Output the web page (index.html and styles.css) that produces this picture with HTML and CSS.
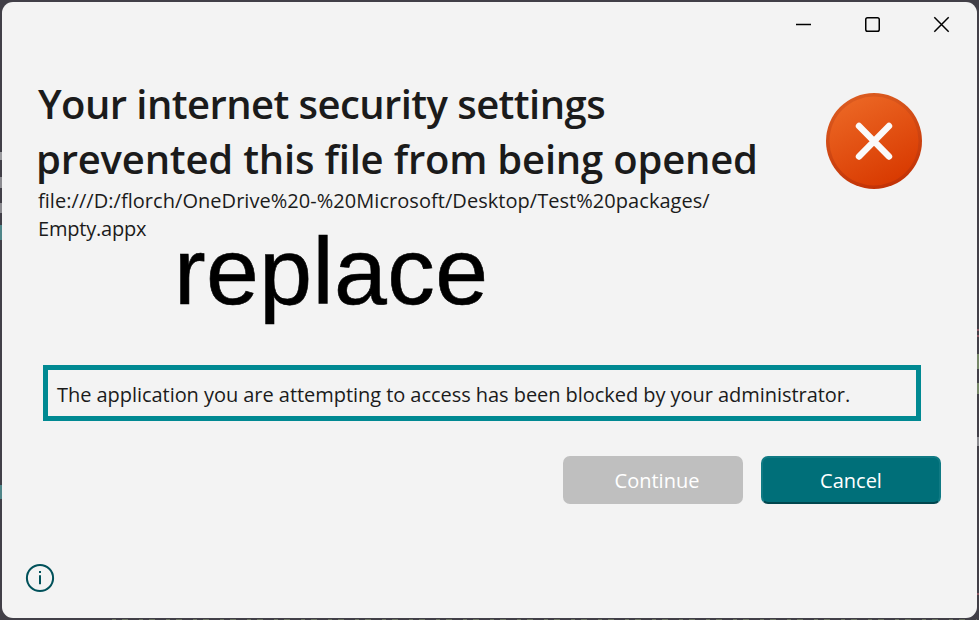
FILE: index.html
```html
<!DOCTYPE html>
<html lang="en">
<head>
<meta charset="utf-8">
<title>Internet security settings</title>
<link rel="stylesheet" href="styles.css">
</head>
<body>
<main class="window">
  <header class="titlebar">
    <svg class="control" viewBox="0 0 18 18"><path d="M2 9.5h15"/></svg>
    <svg class="control" viewBox="0 0 18 18"><rect x="2.750" y="2.750" width="13.5" height="13.5" rx="1.8"/></svg>
    <svg class="control" viewBox="0 0 18 18"><path d="M2.300 2.300l14.400 14.400M16.700 2.300L2.300 16.700"/></svg>
  </header>
  <section class="intro">
    <div class="copy">
      <h1 class="title"><span class="title-first">Your internet security settings</span><span class="title-second">prevented this file from being opened</span></h1>
      <p class="path"><span class="path-folder">file:///D:/florch/OneDrive%20-%20Microsoft/Desktop/Test%20packages/</span><span class="path-file">Empty.appx</span></p>
    </div>
    <svg class="error-icon" viewBox="0 0 96 96">
      <defs>
        <linearGradient id="face" x1=".2" y1="0" x2=".7" y2="1"><stop offset="0" stop-color="#ec6825"/><stop offset="1" stop-color="#d83900"/></linearGradient>
        <linearGradient id="rim" x1=".3" y1="0" x2=".6" y2="1"><stop offset="0" stop-color="#dc5c20"/><stop offset="1" stop-color="#c23205"/></linearGradient>
      </defs>
      <circle cx="48" cy="48" r="48" fill="url(#rim)"/>
      <circle cx="48" cy="48" r="44.5" fill="url(#face)"/>
      <path d="M33 33l30 30.500M63 33l-30 30.500" stroke="#fafafa" stroke-width="6.400" stroke-linecap="round"/>
    </svg>
  </section>
  <div class="replace">replace</div>
  <p class="notice"><span class="notice-text">The application you are attempting to access has been blocked by your administrator.</span></p>
  <div class="actions">
    <button class="button button-disabled" disabled>Continue</button>
    <button class="button button-primary">Cancel</button>
  </div>
  <footer class="footer">
    <svg class="info" viewBox="0 0 30 30"><circle cx="15" cy="15" r="13.100"/><path d="M15 12.200v9"/><path d="M15 8v2"/></svg>
  </footer>
</main>
<div class="backdrop-line"></div>
</body>
</html>
```
FILE: styles.css
```css
* { box-sizing: border-box; }
body {
  margin: 0; width: 979px; height: 620px; padding: 2px 2px 0; overflow: hidden;
  background:
    linear-gradient(transparent 225px, #4f8588 225px 240px, transparent 240px 485px, #4f8588 485px 499px, transparent 499px) 0 0 / 2px 100% no-repeat,
    linear-gradient(transparent 152px, #9a9a9e 152px 160px, transparent 160px 177px, #8b8b90 177px 188px, transparent 188px 203px, #8b8b90 203px 213px, transparent 213px) 0 0 / 2px 100% no-repeat,
    linear-gradient(transparent 329px, #895762 329px 331px, transparent 331px 335px, #895762 335px 337px, transparent 337px 354px, #758567 354px 369px, transparent 369px 383px, #758567 383px 394px, transparent 394px 437px, #88888d 437px 446px, transparent 446px 593px, #895762 593px 595px, transparent 595px) 100% 0 / 2px 100% no-repeat,
    #413f47;
  font-family: "Open Sans", "Noto Sans", sans-serif; color: #1b1b1b;
}
.window { display: flex; flex-direction: column; width: 975px; height: 616px; border-radius: 11px; background: #f3f3f3; }
.titlebar { display: flex; justify-content: flex-end; gap: 51px; height: 44px; padding: 13px 27px 0 0; }
.control { width: 18px; height: 18px; fill: none; stroke: #000; stroke-width: 1.5; }
.intro { display: flex; justify-content: space-between; height: 186px; padding: 30px 55px 0 36px; }
.title { margin: 0 0 1px; font-size: 40px; font-weight: 600; line-height: 55px; white-space: nowrap; }
.title span, .path span { display: block; }
.title-first { letter-spacing: -0.57px; }
.title-second { margin-left: -2px; letter-spacing: -0.2px; }
.path { margin: 0; font-size: 20px; line-height: 28px; white-space: nowrap; }
.path-folder { letter-spacing: 0.045px; }
.path-file { letter-spacing: -0.2px; }
.copy { width: 740px; }
.error-icon { flex: none; width: 96px; height: 96px; margin-top: 17px; fill: none; }
.replace { height: 133px; padding-left: 172px; font: 95px/79px "Liberation Sans", Arial, sans-serif; letter-spacing: 0.4px; color: #000; -webkit-text-stroke: 0.6px #000; }
.notice { width: 878px; height: 56px; margin: 0 0 0 41px; padding: 0 9px; border: 5px solid #008992; font-size: 20px; line-height: 49px; letter-spacing: -0.048px; white-space: nowrap; }
.actions { display: flex; justify-content: flex-end; gap: 18px; margin-top: 35px; padding-right: 36px; }
.button { width: 180px; height: 48px; padding: 1px 0 0 8px; border: 0; border-radius: 7px; font: 20px/28px "Open Sans", "Noto Sans", sans-serif; color: #fff; }
.button-disabled { background: #bfbfbf; }
.button-primary { padding-left: 0; background: #006f79; border: 2px solid #107a84; border-bottom-color: #00464e; }
.footer { padding: 59px 0 0 23px; }
.info { display: block; width: 30px; height: 30px; fill: none; stroke: #00515a; stroke-width: 2; }
.backdrop-line { height: 1px; margin: 1px 0 0 110px; background: repeating-linear-gradient(90deg, #68705f 0 4px, transparent 4px 10px, #68705f 10px 16px, transparent 16px 27px); }
```
